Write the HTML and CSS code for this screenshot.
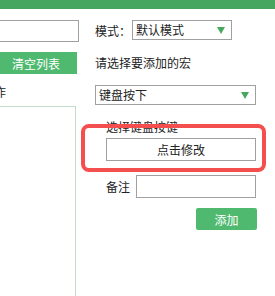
FILE: index.html
```html
<!DOCTYPE html>
<html lang="zh-CN">
<head>
  <meta charset="UTF-8">
  <title>宏设置</title>
  <link rel="stylesheet" href="styles.css">
</head>
<body>
  <div class="topbar"></div>

  <div class="main">
    <div class="left">
      <input type="text" class="text-input">
      <button class="green-btn clear-btn">清空列表</button>
      <div class="list-head">操作</div>
      <div class="list-box"></div>
    </div>

    <div class="right">
      <div class="mode-row">
        <span class="label">模式：</span>
        <div class="select mode-select">默认模式<span class="arrow"></span></div>
      </div>
      <div class="hint">请选择要添加的宏</div>
      <div class="select wide-select">键盘按下<span class="arrow"></span></div>

      <div class="key-block">
        <div class="key-label">选择键盘按键</div>
        <button class="key-btn">点击修改</button>
        <div class="note-row">
          <span class="note-label">备注</span>
          <input type="text" class="note-input">
        </div>
        <div class="add-row">
          <button class="green-btn add-btn">添加</button>
        </div>
      </div>
    </div>
  </div>

  <div class="highlight"></div>
</body>
</html>
```

FILE: styles.css
```css
body {
  margin: 0;
  font-family: "Noto Sans CJK SC", "Noto Sans", sans-serif;
  font-size: 12px;
  color: #222;
  background: #fff;
  overflow: hidden;
  position: relative;
}
.topbar {
  height: 9px;
  background-color: #46a55e;
}
.main {
  display: flex;
  padding-top: 11px;
}
.left {
  width: 160px;
  margin-left: -81px;
  display: flex;
  flex-direction: column;
}
.text-input {
  box-sizing: border-box;
  height: 22px;
  width: 100%;
  margin: 0;
  border: 1px solid #a0a0a0;
  padding: 0;
}
.green-btn {
  background-color: #4fb970;
  color: #fff;
  border: none;
  font-family: inherit;
  font-size: 12px;
  padding: 0;
  cursor: pointer;
}
.clear-btn {
  width: 82px;
  height: 22px;
  margin-top: 10px;
  margin-left: auto;
  margin-right: 2px;
}
.list-head {
  margin-top: 8px;
  line-height: 20px;
  padding-left: 63px;
}
.list-box {
  margin-top: 4px;
  margin-right: 3px;
  height: 200px;
  border: 1px solid #c5dcc8;
}
.right {
  margin-left: 16px;
  width: 162px;
}
.mode-row {
  display: flex;
  align-items: center;
  height: 20px;
}
.label {
  width: 37px;
}
.select {
  box-sizing: border-box;
  border: 1px solid #a0a0a0;
  height: 20px;
  line-height: 18px;
  padding-left: 3px;
  position: relative;
}
.mode-select {
  width: 100px;
}
.wide-select {
  width: 161px;
  margin-top: 12px;
}
.arrow {
  position: absolute;
  right: 6px;
  top: 6px;
  width: 0;
  height: 0;
  border-left: 4px solid transparent;
  border-right: 4px solid transparent;
  border-top: 7px solid #47a85b;
}
.hint {
  margin-top: 13px;
  line-height: 20px;
}
.key-block {
  padding-left: 11px;
}
.key-label {
  margin-top: 12px;
  line-height: 20px;
}
.key-btn {
  display: block;
  box-sizing: border-box;
  width: 150px;
  height: 23px;
  margin-top: 1px;
  background: #fff;
  border: 1px solid #a0a0a0;
  font-family: inherit;
  font-size: 12px;
  color: #222;
  padding: 0;
}
.note-row {
  display: flex;
  align-items: center;
  margin-top: 14px;
}
.note-label {
  width: 30px;
}
.note-input {
  box-sizing: border-box;
  width: 120px;
  height: 23px;
  margin: 0;
  padding: 0;
  border: 1px solid #a0a0a0;
}
.add-row {
  display: flex;
  justify-content: flex-end;
  width: 151px;
  margin-top: 10px;
}
.add-btn {
  width: 61px;
  height: 22px;
  border-radius: 2px;
}
.highlight {
  position: absolute;
  left: 81px;
  top: 124px;
  width: 185px;
  height: 48px;
  box-sizing: border-box;
  border: 4px solid #f44e4e;
  border-radius: 8px;
}
```
